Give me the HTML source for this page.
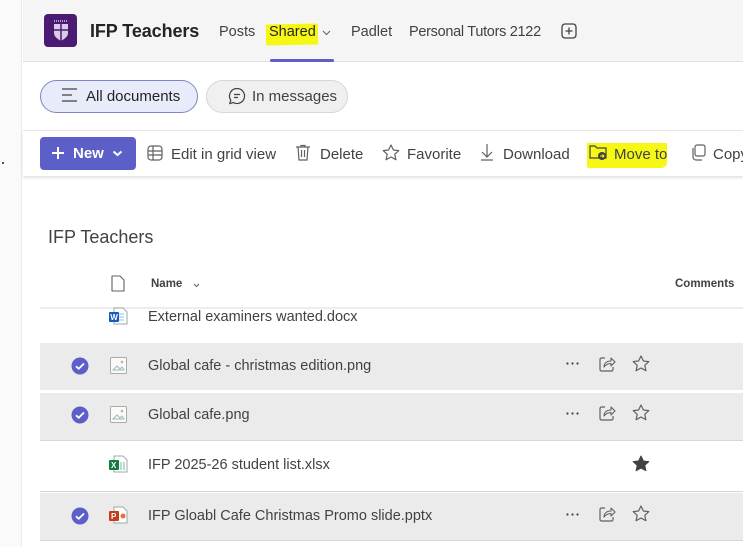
<!DOCTYPE html>
<html><head><meta charset="utf-8"><style>
*{margin:0;padding:0;box-sizing:border-box}
body{width:743px;height:547px;overflow:hidden;background:#fff;font-family:"Liberation Sans",Arial,sans-serif;color:#424242;position:relative}
.a{position:absolute;white-space:nowrap}
svg{position:absolute;overflow:visible}
</style></head><body>
<div class="a" style="left:0;top:0;width:22px;height:547px;background:#fafafa;border-right:1px solid #ececec"></div>
<div class="a" style="left:2px;top:162px;width:2px;height:2px;background:#555"></div>
<div class="a" style="left:23px;top:0;width:720px;height:62px;background:#f5f5f5;border-bottom:1px solid #e0e0e0"></div>
<div class="a" style="left:44px;top:14px;width:33px;height:33px;background:#4b1a72;border-radius:4px"></div>
<svg style="left:52px;top:20px" width="18" height="22" viewBox="0 0 18 22"><path d="M2 4h14v9c0 4-4 6-7 8-3-2-7-4-7-8z" fill="#d9cce6"/><path d="M2 10h14M9 4v17" stroke="#4b1a72" stroke-width="1.5"/><path d="M2 1h14" stroke="#d9cce6" stroke-width="1.5" stroke-dasharray="1 1"/></svg>
<div class="a" style="left:90px;top:21px;font-size:18px;font-weight:bold;color:#242424;letter-spacing:-0.1px">IFP Teachers</div>
<div class="a" style="left:219px;top:24px;font-size:14.5px;color:#424242">Posts</div>
<div class="a" style="left:266px;top:24px;width:52px;height:21px;background:#f7f716;transform:rotate(-1deg)"></div>
<div class="a" style="left:269px;top:24px;font-size:14.5px;color:#242424">Shared</div>
<svg style="left:322px;top:30px" width="9" height="6"><path d="M1 1l3.5 3.5L8 1" stroke="#616161" fill="none"/></svg>
<div class="a" style="left:270px;top:59px;width:64px;height:3px;background:#5b5fc7;border-radius:2px"></div>
<div class="a" style="left:351px;top:24px;font-size:14.5px">Padlet</div>
<div class="a" style="left:409px;top:24px;font-size:14.5px;letter-spacing:-0.3px">Personal Tutors 2122</div>
<svg style="left:561px;top:23px" width="16" height="16"><rect x="1" y="1" width="14" height="14" rx="3" stroke="#424242" fill="none" stroke-width="1.3"/><path d="M8 4.5v7M4.5 8h7" stroke="#424242" stroke-width="1.3"/></svg>

<div class="a" style="left:40px;top:80px;width:158px;height:33px;background:#e8ebfa;border:1px solid #7f85c9;border-radius:17px"></div>
<svg style="left:61px;top:88px" width="17" height="15"><path d="M1 1h15M1 7h10M1 13h15" stroke="#424242" stroke-width="1.2"/></svg>
<div class="a" style="left:86px;top:88px;font-size:15px;color:#242424">All documents</div>
<div class="a" style="left:206px;top:80px;width:142px;height:33px;background:#f0f0f0;border:1px solid #d6d6d6;border-radius:17px"></div>
<svg style="left:228px;top:87px" width="18" height="18"><path d="M9 1.5a7.5 7.5 0 1 1-3.7 14l-3.5 1 1-3.3A7.5 7.5 0 0 1 9 1.5z" stroke="#424242" fill="none" stroke-width="1.2"/><path d="M6 7.5h6M6 10.5h4" stroke="#424242" stroke-width="1.2"/></svg>
<div class="a" style="left:252px;top:88px;font-size:15px">In messages</div>

<div class="a" style="left:23px;top:130px;width:720px;height:46px;border-top:1px solid #e6e6e6;box-shadow:0 2px 3px rgba(0,0,0,.12)"></div>
<div class="a" style="left:40px;top:137px;width:96px;height:33px;background:#5b5fc7;border-radius:4px"></div>
<svg style="left:51px;top:146px" width="14" height="14"><path d="M7 1v12M1 7h12" stroke="#fff" stroke-width="2"/></svg>
<div class="a" style="left:73px;top:145px;font-size:15px;font-weight:bold;color:#fff">New</div>
<svg style="left:112px;top:150px" width="11" height="7"><path d="M1.5 1.5l4 3.5 4-3.5" stroke="#fff" stroke-width="2" fill="none"/></svg>
<svg style="left:147px;top:145px" width="16" height="16"><rect x="1" y="1" width="14" height="14" rx="3" stroke="#616161" fill="none" stroke-width="1.2"/><path d="M1 6h14M1 10h14M6 1v14" stroke="#616161" stroke-width="1.2"/></svg>
<div class="a" style="left:171px;top:146px;font-size:15px">Edit in grid view</div>
<svg style="left:295px;top:144px" width="16" height="18"><path d="M1 3h14M6 3V1.5h4V3M3 3l1 13h8l1-13M6.5 6v7M9.5 6v7" stroke="#616161" fill="none" stroke-width="1.2"/></svg>
<div class="a" style="left:320px;top:146px;font-size:15px">Delete</div>
<svg style="left:382px;top:144px" width="18" height="17"><path d="M9 1l2.4 5 5.4.6-4 3.7 1.1 5.4L9 13 4.1 15.7l1.1-5.4-4-3.7 5.4-.6z" stroke="#616161" fill="none" stroke-width="1.2" stroke-linejoin="round"/></svg>
<div class="a" style="left:407px;top:146px;font-size:15px">Favorite</div>
<svg style="left:479px;top:143px" width="16" height="18"><path d="M8 1v13M3 9l5 5 5-5M2 17h12" stroke="#616161" fill="none" stroke-width="1.2"/></svg>
<div class="a" style="left:503px;top:146px;font-size:15px">Download</div>
<div class="a" style="left:587px;top:143px;width:80px;height:25px;background:#f7f716;border-radius:0 0 6px 2px"></div>
<svg style="left:589px;top:144px" width="19" height="17"><path d="M1 2h5l2 2h9v10H1z" stroke="#424242" fill="none" stroke-width="1.2"/><circle cx="13" cy="12" r="4" fill="#424242"/><path d="M11 12h4M13.5 10.5l1.5 1.5-1.5 1.5" stroke="#f7f716" fill="none"/></svg>
<div class="a" style="left:614px;top:146px;font-size:15px">Move to</div>
<svg style="left:690px;top:144px" width="16" height="17"><rect x="5" y="1" width="10" height="11" rx="2" stroke="#616161" fill="none" stroke-width="1.2"/><path d="M3 4v9a3 3 0 0 0 3 3h6" stroke="#616161" fill="none" stroke-width="1.2"/></svg>
<div class="a" style="left:713px;top:146px;font-size:15px">Copy</div>

<div class="a" style="left:48px;top:227px;font-size:18px;color:#424242">IFP Teachers</div>
<svg style="left:111px;top:275px" width="14" height="17"><path d="M1 1h8l4 4v11H1z" stroke="#616161" fill="none" stroke-width="1.1" stroke-linejoin="round"/></svg>
<div class="a" style="left:151px;top:278px;font-size:11.5px;font-weight:bold;color:#424242">Name</div>
<svg style="left:193px;top:283px" width="7" height="5"><path d="M1 1l2.5 2.5L6 1" stroke="#616161" fill="none"/></svg>
<div class="a" style="left:675px;top:278px;font-size:11.5px;font-weight:bold;color:#424242">Comments</div>
<div class="a" style="left:40px;top:307px;width:703px;height:2px;background:#ededed"></div>

<div class="a" style="left:40px;top:343px;width:703px;height:47px;background:#ebebeb"></div>
<div class="a" style="left:40px;top:393px;width:703px;height:48px;background:#ebebeb;border-bottom:1px solid #d6d6d6"></div>
<div class="a" style="left:40px;top:491px;width:703px;height:1px;background:#d6d6d6"></div>
<div class="a" style="left:40px;top:493px;width:703px;height:48px;background:#ebebeb;border-bottom:1px solid #d6d6d6"></div>

<svg style="left:108px;top:307px" width="20" height="18"><path d="M6 1h9l4 4v12H6z" fill="#fff" stroke="#9aa" stroke-width="1"/><path d="M9 7h7M9 10h7M9 13h7" stroke="#9db8e5"/><rect x="1" y="5" width="10" height="10" rx="1" fill="#185abd"/><text x="2.3" y="13" font-size="8" font-weight="bold" fill="#fff" font-family="Liberation Sans">W</text></svg>
<div class="a" style="left:148px;top:309px;font-size:14.5px">External examiners wanted.docx</div>

<div class="a" style="left:148px;top:358px;font-size:14.5px">Global cafe - christmas edition.png</div>
<div class="a" style="left:148px;top:407px;font-size:14.5px">Global cafe.png</div>
<div class="a" style="left:148px;top:457px;font-size:14.5px">IFP 2025-26 student list.xlsx</div>
<div class="a" style="left:148px;top:508px;font-size:14.5px">IFP Gloabl Cafe Christmas Promo slide.pptx</div>

<svg style="left:71px;top:357px" width="18" height="18"><circle cx="9" cy="9" r="8.5" fill="#5b5fc7"/><path d="M5 9.3l2.7 2.5L13 6.5" stroke="#fff" stroke-width="1.8" fill="none"/></svg>
<svg style="left:71px;top:406px" width="18" height="18"><circle cx="9" cy="9" r="8.5" fill="#5b5fc7"/><path d="M5 9.3l2.7 2.5L13 6.5" stroke="#fff" stroke-width="1.8" fill="none"/></svg>
<svg style="left:71px;top:507px" width="18" height="18"><circle cx="9" cy="9" r="8.5" fill="#5b5fc7"/><path d="M5 9.3l2.7 2.5L13 6.5" stroke="#fff" stroke-width="1.8" fill="none"/></svg>

<svg style="left:110px;top:357px" width="17" height="17"><rect x="0.5" y="0.5" width="16" height="16" rx="1" fill="#fafafa" stroke="#aaa"/><path d="M3 13l4-4 3 3 2-2 2 3z" fill="none" stroke="#9bb"/><circle cx="12" cy="5" r="1.3" fill="#e8a36a"/></svg>
<svg style="left:110px;top:406px" width="17" height="17"><rect x="0.5" y="0.5" width="16" height="16" rx="1" fill="#fafafa" stroke="#aaa"/><path d="M3 13l4-4 3 3 2-2 2 3z" fill="none" stroke="#9bb"/><circle cx="12" cy="5" r="1.3" fill="#e8a36a"/></svg>
<svg style="left:108px;top:455px" width="20" height="18"><path d="M6 1h9l4 4v12H6z" fill="#fff" stroke="#9aa"/><path d="M13 7v8M16 7v8" stroke="#6fbf8f"/><rect x="1" y="5" width="10" height="10" rx="1" fill="#107c41"/><text x="3" y="13" font-size="8" font-weight="bold" fill="#fff" font-family="Liberation Sans">X</text></svg>
<svg style="left:108px;top:506px" width="20" height="18"><path d="M6 1h9l4 4v12H6z" fill="#fff" stroke="#9aa"/><circle cx="15" cy="10" r="2.5" fill="#ed6c47"/><rect x="1" y="5" width="10" height="10" rx="1" fill="#c43e1c"/><text x="3" y="13" font-size="8" font-weight="bold" fill="#fff" font-family="Liberation Sans">P</text></svg>

<svg style="left:566px;top:362px" width="14" height="3"><circle cx="1.5" cy="1.5" r="1.1" fill="#424242"/><circle cx="6.5" cy="1.5" r="1.1" fill="#424242"/><circle cx="11.5" cy="1.5" r="1.1" fill="#424242"/></svg>
<svg style="left:566px;top:412px" width="14" height="3"><circle cx="1.5" cy="1.5" r="1.1" fill="#424242"/><circle cx="6.5" cy="1.5" r="1.1" fill="#424242"/><circle cx="11.5" cy="1.5" r="1.1" fill="#424242"/></svg>
<svg style="left:566px;top:513px" width="14" height="3"><circle cx="1.5" cy="1.5" r="1.1" fill="#424242"/><circle cx="6.5" cy="1.5" r="1.1" fill="#424242"/><circle cx="11.5" cy="1.5" r="1.1" fill="#424242"/></svg>
<svg style="left:599px;top:356px" width="17" height="16"><path d="M6 2H2.5a1.5 1.5 0 0 0-1.5 1.5v10A1.5 1.5 0 0 0 2.5 15h10a1.5 1.5 0 0 0 1.5-1.5V11" stroke="#616161" fill="none" stroke-width="1.2"/><path d="M5 11c0-4 3-6 7-6V2l4 4-4 4V7.5c-3 0-5 1-7 3.5z" stroke="#616161" fill="none" stroke-width="1.1" stroke-linejoin="round"/></svg>
<svg style="left:599px;top:405px" width="17" height="16"><path d="M6 2H2.5a1.5 1.5 0 0 0-1.5 1.5v10A1.5 1.5 0 0 0 2.5 15h10a1.5 1.5 0 0 0 1.5-1.5V11" stroke="#616161" fill="none" stroke-width="1.2"/><path d="M5 11c0-4 3-6 7-6V2l4 4-4 4V7.5c-3 0-5 1-7 3.5z" stroke="#616161" fill="none" stroke-width="1.1" stroke-linejoin="round"/></svg>
<svg style="left:599px;top:506px" width="17" height="16"><path d="M6 2H2.5a1.5 1.5 0 0 0-1.5 1.5v10A1.5 1.5 0 0 0 2.5 15h10a1.5 1.5 0 0 0 1.5-1.5V11" stroke="#616161" fill="none" stroke-width="1.2"/><path d="M5 11c0-4 3-6 7-6V2l4 4-4 4V7.5c-3 0-5 1-7 3.5z" stroke="#616161" fill="none" stroke-width="1.1" stroke-linejoin="round"/></svg>
<svg style="left:632px;top:355px" width="18" height="17"><path d="M9 1l2.4 5 5.4.6-4 3.7 1.1 5.4L9 13 4.1 15.7l1.1-5.4-4-3.7 5.4-.6z" stroke="#616161" fill="none" stroke-width="1.2" stroke-linejoin="round"/></svg>
<svg style="left:632px;top:404px" width="18" height="17"><path d="M9 1l2.4 5 5.4.6-4 3.7 1.1 5.4L9 13 4.1 15.7l1.1-5.4-4-3.7 5.4-.6z" stroke="#616161" fill="none" stroke-width="1.2" stroke-linejoin="round"/></svg>
<svg style="left:632px;top:455px" width="18" height="17"><path d="M9 1l2.4 5 5.4.6-4 3.7 1.1 5.4L9 13 4.1 15.7l1.1-5.4-4-3.7 5.4-.6z" fill="#424242" stroke="#424242" stroke-width="1" stroke-linejoin="round"/></svg>
<svg style="left:632px;top:505px" width="18" height="17"><path d="M9 1l2.4 5 5.4.6-4 3.7 1.1 5.4L9 13 4.1 15.7l1.1-5.4-4-3.7 5.4-.6z" stroke="#616161" fill="none" stroke-width="1.2" stroke-linejoin="round"/></svg>
</body></html>
